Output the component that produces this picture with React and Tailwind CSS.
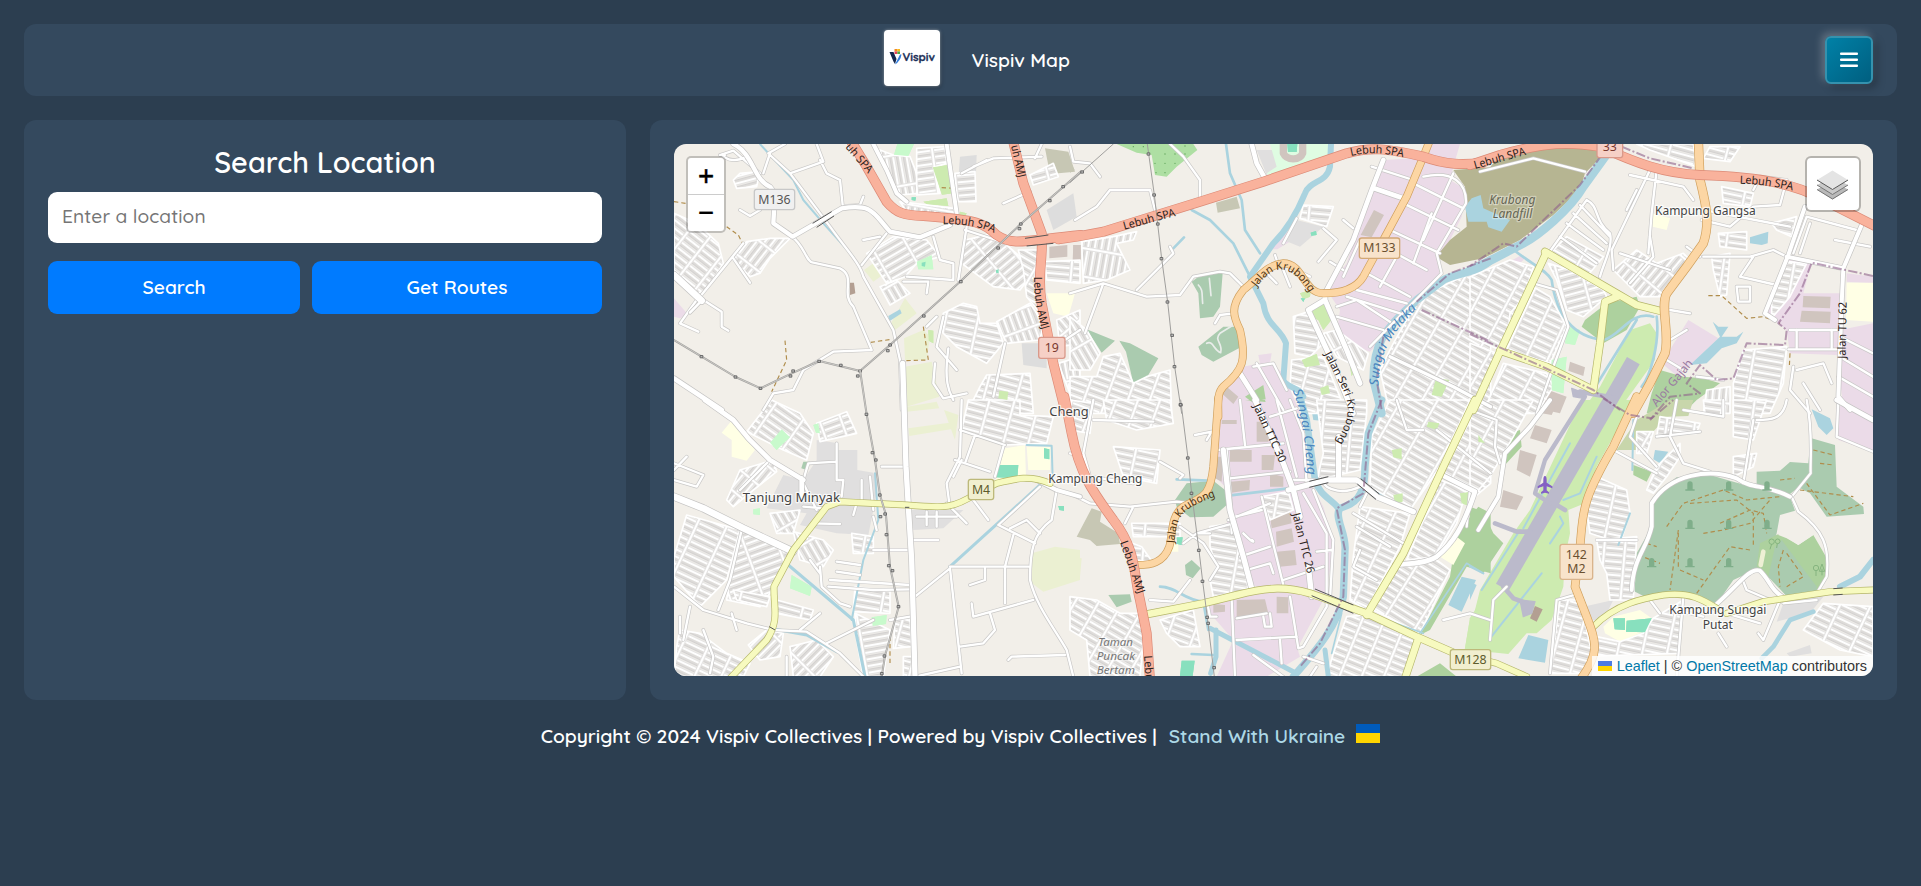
import React from "react";

/* Map sheets: each sheet is drawn at three units per pixel from its own origin. */
const SHEETS = {
  A: [660, 130],
  B: [1070, 130],
  C: [1470, 130],
  D: [660, 400],
  E: [1070, 400],
  F: [1470, 400],
};
const place = (s) => `translate(${SHEETS[s][0]} ${SHEETS[s][1]}) scale(0.33333)`;

const AREAS = [
  // industrial
  ["B", "#ebdbe8", "M940,90 L1030,85 1060,60 1085,42 1170,42 1150,110 1140,150 1190,180 1175,260 1105,400 1110,440 1040,500 900,665 860,650 800,610 810,540 770,480 830,400 905,170Z"],
  ["B", "#ebdbe8", "M565,675 L605,670 600,700 640,730 690,850 445,850 450,790 520,710 570,700Z"],
  ["B", "#ebdbe8", "M605,358 L650,300 668,330 622,358Z"],
  ["E", "#ebdbe8", "M450,0 L655,0 690,60 712,230 760,320 795,440 760,600 682,745 690,770 590,830 440,830 490,720 420,640 420,600 560,560 500,520 470,370 480,350 475,270 435,230Z"],
  ["C", "#ebdbe8", "M655,570 L745,625 625,740 575,700Z"],
  ["C", "#ebdbe8", "M950,390 L1025,395 1000,490 1110,490 1110,600 1209,580 1209,840 1120,830 1100,675 960,670 950,600 885,550Z"],
  ["C", "#ebdbe8", "M1130,430 L1209,440 1209,460 1130,455Z M100,405 L155,375 165,385 130,420Z"],
  ["F", "#ebdbe8", "M1100,20 L1209,0 1209,155 1105,120Z"],
  ["A", "#ebdbe8", "M42,505 L85,555 60,565 42,560Z"],
  // built-up grey
  ["D", "#e0dfdf", "M470,120 L535,130 535,150 592,150 592,210 640,218 655,250 640,330 625,405 530,400 420,375 440,340 320,325 370,225 430,240 470,180Z"],
  ["D", "#e0dfdf", "M750,330 L910,330 850,385 760,390Z"],
  ["B", "#e0dfdf", "M680,270 L760,290 690,350 640,330Z M560,60 L610,60 625,115 590,135Z"],
  ["A", "#dddddd", "M900,80 L950,75 945,215 890,210Z M1160,240 L1240,190 1250,260 1180,300Z M1085,640 L1160,640 1160,715 1090,705Z"],
  ["F", "#e0dfdf", "M340,620 L430,600 400,660 350,660Z M940,610 L1040,585 1060,590 1020,640 920,665Z M950,760 L1020,735 1025,760 960,770Z"],
  // landfill and brownfield
  ["C", "#b6b592", "M-50,120 L60,112 90,75 240,50 385,55 390,85 345,130 330,180 250,255 150,330 40,385 -60,405 -102,380 -60,330 -10,290 -15,170Z"],
  ["C", "#aad3df", "M-15,230 L5,205 32,195 40,235 120,270 95,305 55,292 50,275 -5,275Z"],
  ["A", "#c7c7b4", "M1155,55 L1225,65 1245,125 1170,132Z"],
  ["B", "#c7c7b4", "M438,218 L500,200 510,235 443,248Z M0,95 L14,120 0,128Z"],
  ["E", "#c7c7b4", "M65,325 L95,335 90,365 145,400 150,432 80,438 60,420 20,410Z"],
  // airfield
  ["C", "#cdebb0", "M480,600 L540,580 560,610 555,690 440,850 330,850 390,770Z"],
  ["F", "#cdebb0", "M335,0 L485,0 430,110 380,200 345,310 295,330 300,400 285,470 280,560 245,660 200,700 170,700 115,762 0,750 0,690 30,570 130,400 180,330Z"],
  ["E", "#cdebb0", "M1200,655 L1260,560 1260,790 1180,775Z"],
  // woods, parks
  ["C", "#add19e", "M345,570 L410,520 500,500 510,530 470,600 400,640 335,590Z"],
  ["E", "#add19e", "M1225,320 L1262,340 1262,520 1190,500 1080,690 1050,705 1140,530 1160,400Z"],
  ["F", "#add19e", "M85,110 L150,90 155,140 100,200Z M0,320 L40,335 70,400 100,430 40,520 0,500Z M495,60 L530,60 525,95 500,100Z M490,195 L545,215 530,245 490,225Z"],
  ["E", "#add19e", "M1110,790 L1160,830 1040,830Z M525,0 L585,0 587,6 545,2Z"],
  ["B", "#add19e", "M525,800 L580,765 587,808 545,815Z"],
  ["B", "#aedfa3", "M140,42 L370,42 382,60 320,110 290,140 255,135 245,75 200,68Z"],
  ["B", "#cdebb0", "M730,535 L770,520 792,560 760,600 745,570 722,560Z M695,690 L740,672 750,705 705,712Z M840,710 L862,710 845,738Z M750,775 L775,765 780,790 755,795Z M1098,745 L1138,750 1115,800 1085,795Z M690,490 L722,480 720,500 700,508Z"],
  ["E", "#cdebb0", "M965,150 L995,145 995,178 970,172Z M1075,65 L1108,70 1100,90 1070,80Z M1170,280 L1205,275 1198,318 1175,310Z M970,285 L998,280 998,305 975,310Z M1225,105 L1245,130 1225,125Z"],
  ["A", "#cdebb0", "M818,112 L870,104 878,190 846,194Z M790,215 L860,205 865,228 800,222Z M900,245 L920,250 915,260 898,256Z M805,600 L820,602 820,640 806,632Z M1018,782 L1045,785 1042,810 1015,805Z"],
  ["A", "#c8facc", "M712,42 L762,42 745,78 702,74Z M770,395 L815,375 820,418 775,418Z"],
  ["D", "#c8facc", "M330,128 L365,88 390,112 350,150Z M395,525 L455,560 450,588 390,565Z M460,75 L475,70 480,100 468,98Z M635,652 L680,645 678,672 638,678Z M280,328 L300,325 300,345 280,343Z"],
  ["C", "#c8facc", "M295,590 L330,600 315,645 285,640Z M245,690 L290,680 280,790 245,780Z"],
  ["C", "#aed1a0", "M570,720 L640,740 700,745 750,760 680,810 640,850 530,850 545,790Z"],
  ["F", "#c8d6ab", "M600,0 L670,0 655,48 590,50 500,150 440,150 500,60Z"],
  ["B", "#dffce2", "M600,42 L785,42 775,90 600,140 590,130 620,110Z"],
  // cemetery, forest
  ["B", "#aacbaf", "M365,455 L400,430 458,430 450,530 430,560 390,565 385,490Z"],
  ["B", "#aacbaf", "M385,650 L460,590 500,590 515,650 430,695 395,675Z M50,598 L135,632 95,668Z M148,632 L180,640 265,685 220,760 190,760 168,665Z"],
  ["E", "#aacbaf", "M315,300 L350,250 430,242 465,270 470,315 430,350 360,352 320,320Z M345,495 L365,480 392,505 368,535 348,525Z M115,585 L180,583 185,605 140,622Z"],
  ["F", "#aacbaf", "M620,232 L720,225 790,245 850,262 960,290 975,332 930,345 920,400 890,500 850,512 790,540 740,612 680,583 580,583 520,588 485,570 500,460 545,380 550,310 580,260Z"],
  ["F", "#aacbaf", "M860,215 L930,212 960,186 1015,190 1022,114 1095,135 1100,260 1180,320 1182,342 1070,350 1020,280 985,262 950,290 880,260 860,255Z"],
  ["F", "#add19e", "M870,430 L930,400 985,435 1030,405 1068,470 1070,530 1040,580 950,588 895,530 860,500Z"],
  ["F", "#aacbaf", "M935,420 L1040,560 1040,580 950,588 895,530 915,440Z"],
  ["F", "#f2efe9", "M930,350 L970,340 1030,405 985,435 950,415 925,405Z"],
  ["D", "#aacbaf", "M430,185 L450,185 440,210 424,205Z"],
  // scrub and schools
  ["A", "#ebf0d2", "M690,585 L735,505 770,550 705,600Z M612,420 L640,400 675,430 640,455Z M732,625 L790,600 810,620 800,690 735,690Z M735,710 L815,695 838,800 740,830Z"],
  ["D", "#ebf0d2", "M740,20 L830,5 838,25 740,35Z M745,85 L890,65 890,85 748,108Z M852,30 L895,45 885,120Z M1115,460 L1185,440 1260,450 1260,540 1150,575 1110,545Z"],
  ["E", "#ebf0d2", "M0,470 L35,475 30,530 0,540Z"],
  ["A", "#ffffe5", "M1160,490 L1245,490 1225,560 1180,550Z"],
  ["D", "#ffffe5", "M185,98 L212,65 250,95 270,130 285,150 260,182 215,170 215,120Z M1035,145 L1095,135 1098,235 1005,240Z M1100,140 L1172,140 1170,210 1105,210Z"],
  ["C", "#ffffe5", "M1130,458 L1209,458 1209,575 1128,570Z M140,440 L170,445 155,502 135,495Z M545,250 L600,265 590,300 548,290Z"],
  ["F", "#ffffe5", "M400,680 L430,650 510,630 545,655 520,695 450,725 405,700Z"],
  ["E", "#ffffe5", "M1160,410 L1185,430 1150,495 1110,470Z M305,430 L325,425 325,455 300,455Z"],
  // pitches
  ["D", "#88e0be", "M1018,195 L1075,195 1072,235 1008,232Z M1152,145 L1168,148 1168,178 1152,175Z M1195,318 L1212,318 1212,332 1198,330Z"],
  ["F", "#88e0be", "M430,655 L465,655 465,690 434,688Z M470,662 L545,655 525,697 468,695Z"],
  ["E", "#88e0be", "M335,782 L374,782 368,828 330,828Z M320,412 L338,412 335,435 322,432Z"],
  ["B", "#88e0be", "M652,42 L682,42 680,66 654,66Z M722,308 L738,303 740,315 724,317Z M692,505 L705,505 700,516Z"],
  ["A", "#88e0be", "M785,398 L797,395 795,410 785,408Z M755,202 L768,202 766,212 755,210Z M1008,420 L1016,418 1016,430 1008,428Z"],
  // water
  ["F", "#aad3df", "M175,705 L235,720 225,788 145,775Z M1025,28 L1080,55 1090,85 1070,105 1045,80Z M555,150 L595,155 570,190 550,178Z M0,545 L20,555 0,600Z"],
  ["C", "#aad3df", "M840,322 L895,305 893,340 875,345 840,340Z M660,705 L750,620 728,575 745,590 775,590 755,620 800,620 820,605 800,640 755,655 710,700Z"],
  ["E", "#aad3df", "M1175,530 L1218,540 1175,635 1135,615Z M915,255 L962,265 950,290 910,280Z M725,32 L782,40 780,65 730,60Z"],
  ["A", "#aad3df", "M685,558 L720,538 725,550 688,574Z"],
  // buildings
  ["A", "#d0c5bf", "M1168,350 L1222,345 1222,380 1168,385Z M1240,345 L1262,345 1262,395 1240,390Z M1095,380 L1130,385 1130,402 1098,402Z"],
  ["A", "#b39f92", "M570,458 L582,458 586,490 570,495Z"],
  ["B", "#d0c5bf", "M912,240 L942,255 905,322 872,315Z M470,770 L505,800 490,822 455,790Z M10,345 L32,345 32,392 8,390Z"],
  ["E", "#d0c5bf", "M480,150 L545,150 545,185 480,185Z M575,165 L615,165 610,210 575,210Z M440,170 L460,170 455,245 435,235Z M600,220 L640,230 640,260 600,260Z M482,245 L540,240 538,270 485,278Z M560,65 L595,65 595,125 560,125Z M600,350 L660,335 665,370 605,385Z M618,395 L665,385 672,425 620,440Z M620,455 L675,450 680,495 630,500Z M500,600 L585,598 595,640 500,650Z M620,590 L655,592 655,640 620,640Z M430,612 L465,615 465,635 430,638Z M455,60 L500,60 500,72 455,72Z"],
  ["C", "#d0c5bf", "M1000,498 L1082,500 1080,535 998,532Z M995,542 L1082,545 1080,580 990,575Z M300,695 L345,712 340,738 295,722Z M235,780 L290,800 270,850 225,840Z"],
  ["F", "#d0c5bf", "M225,0 L265,0 245,45 215,40Z M195,75 L245,90 230,130 180,115Z M150,150 L200,165 180,230 140,210Z M100,270 L160,290 140,330 90,320Z"],
  ["F", "#b39f92", "M195,618 L218,628 200,665 180,655Z"],
];

/* Housing estates: sheet, street direction in degrees, outline */
const ESTATES = [
  ["A", 38, "M42,250 L110,280 175,340 190,400 140,480 110,490 42,420Z"],
  ["A", 128, "M215,385 L260,335 330,325 390,325 330,385 300,430 270,440Z"],
  ["A", 165, "M220,150 L240,130 300,125 290,170 230,175Z"],
  ["A", 80, "M660,60 L700,75 750,80 770,130 780,190 715,195 680,130Z"],
  ["A", 172, "M770,55 L855,50 860,100 820,112 830,150 840,190 770,195Z"],
  ["A", 175, "M885,130 L945,125 948,215 895,215 885,170Z"],
  ["A", 100, "M720,215 L880,235 890,258 740,245Z"],
  ["A", 150, "M620,370 L700,320 800,330 840,380 770,400 735,440 680,460Z"],
  ["A", 60, "M660,470 L710,450 750,490 690,525Z"],
  ["A", 140, "M915,330 L1000,310 1080,380 1110,440 1080,480 1000,470 905,400Z"],
  ["A", 30, "M1075,360 L1135,360 1125,440 1150,560 1100,500 1090,420Z"],
  ["A", 12, "M850,550 L910,520 950,530 960,580 1010,580 1030,640 980,700 890,650 840,600Z"],
  ["A", 70, "M1010,575 L1110,520 1150,580 1140,630 1040,640Z"],
  ["A", 165, "M1110,135 L1180,100 1195,140 1120,165Z"],
  ["A", 5, "M1155,395 L1260,390 1260,460 1160,450Z"],
  ["A", 15, "M980,735 L1110,730 1120,850 920,850 960,770Z"],
  ["A", 50, "M1190,570 L1260,540 1260,640 1200,650Z"],
  ["A", 80, "M1195,700 L1260,680 1260,790 1230,790Z"],
  ["B", 100, "M35,335 L130,320 200,305 190,330 140,340 180,420 110,450 40,460Z"],
  ["B", 60, "M0,560 L50,600 90,670 60,720 0,720Z"],
  ["B", 20, "M100,680 L150,670 190,760 230,740 300,720 305,850 0,850 0,740 80,740Z"],
  ["B", 5, "M700,225 L790,230 770,290 690,265Z"],
  ["B", 10, "M670,560 L715,545 760,640 720,680 675,670Z"],
  ["B", 62, "M760,610 L800,600 895,670 880,720 840,700 800,680Z"],
  ["B", 15, "M665,690 L760,680 830,850 700,850 660,770Z"],
  ["B", 30, "M1050,500 L1200,430 1262,450 1262,830 1170,850 960,850 930,720 970,640Z"],
  ["C", 28, "M0,440 L120,390 190,410 150,540 90,660 0,620Z"],
  ["C", 30, "M0,640 L80,670 0,840Z"],
  ["C", 25, "M120,550 L190,470 240,500 290,590 240,700 110,660Z"],
  ["C", 165, "M235,400 L300,420 400,480 410,500 340,560 290,540 260,450Z"],
  ["C", 28, "M100,700 L230,730 250,770 200,850 40,850Z"],
  ["C", 30, "M240,370 L290,320 400,380 350,440Z"],
  ["C", 130, "M430,420 L500,360 560,400 640,370 660,390 580,500 510,500Z"],
  ["C", 8, "M725,380 L780,370 770,495 750,500 730,420Z M745,310 L830,305 830,360 750,350Z"],
  ["C", 12, "M755,170 L850,190 840,230 760,220Z M905,280 L980,260 965,320 920,300Z"],
  ["C", 10, "M820,660 L950,650 940,760 900,850 790,850 790,760Z"],
  ["C", 95, "M710,780 L780,770 780,850 700,850Z"],
  ["C", 10, "M905,480 L955,395 1010,400 960,500 905,565Z"],
  ["C", 15, "M500,42 L540,60 680,110 670,42Z M720,50 L810,50 780,95 700,85Z"],
  ["D", 35, "M335,0 L420,40 460,100 440,180 370,150 260,95Z"],
  ["D", 160, "M470,70 L560,35 590,100 480,125Z"],
  ["D", 15, "M925,0 L1080,0 1080,45 1180,50 1160,130 1035,135 905,90Z"],
  ["D", 25, "M80,345 L240,390 200,540 120,620 42,530 42,470Z"],
  ["D", 160, "M240,390 L340,430 390,460 330,580 300,620 200,600 215,500Z"],
  ["D", 130, "M240,210 L340,180 350,215 280,270 220,320 200,300Z"],
  ["D", 60, "M400,395 L490,420 520,450 490,500 420,480Z M330,340 L420,330 400,400 350,400Z"],
  ["D", 10, "M575,400 L640,410 640,460 580,460Z M585,560 L690,575 690,640 580,635Z"],
  ["D", 170, "M585,640 L690,690 670,830 610,830 590,720Z"],
  ["D", 15, "M705,660 L750,655 755,740 700,745Z M730,770 L765,770 765,830 730,830Z"],
  ["D", 25, "M60,690 L120,700 200,760 270,790 250,830 42,830 50,740Z"],
  ["D", 135, "M265,735 L320,690 370,700 360,770 300,780Z M390,740 L470,720 520,770 480,830 400,830Z"],
  ["D", 15, "M350,600 L460,630 450,660 350,640Z M220,570 L330,590 320,620 230,600Z"],
  ["E", 20, "M0,0 L70,10 60,100 0,90Z M100,0 L300,0 310,70 200,90 110,60Z"],
  ["E", 12, "M130,140 L270,150 260,250 160,230Z"],
  ["E", 5, "M185,370 L330,370 330,410 190,410Z M175,425 L215,440 250,490 200,480Z"],
  ["E", 10, "M420,380 L490,370 520,480 535,570 430,590 420,540 440,500 420,440Z"],
  ["E", 30, "M0,590 L80,600 150,640 215,640 220,720 210,830 60,830 50,720 0,690Z"],
  ["E", 20, "M270,660 L370,630 390,740 330,740 290,700Z"],
  ["E", 5, "M740,0 L890,0 890,40 870,210 740,240 760,160Z"],
  ["E", 30, "M960,0 L1200,0 1110,200 1020,330 900,260 905,110Z"],
  ["E", 28, "M1225,10 L1262,30 1262,250 1215,290 1120,220Z"],
  ["E", 25, "M870,320 L1020,340 990,440 890,630 840,600 850,470Z"],
  ["E", 30, "M1110,240 L1190,270 1160,370 1100,470 1010,480Z"],
  ["E", 32, "M970,500 L1100,480 1140,510 1050,700 910,630Z"],
  ["E", 22, "M830,650 L890,645 1040,710 1000,830 770,830 790,760Z"],
  ["E", 10, "M575,290 L655,275 670,330 600,360Z"],
  ["F", 28, "M0,40 L60,0 190,0 130,110 60,230 0,300Z"],
  ["F", 12, "M380,230 L470,270 480,340 450,430 360,400 350,330Z"],
  ["F", 5, "M380,420 L500,410 490,600 420,600 410,520 390,480Z"],
  ["F", 30, "M500,95 L550,95 530,160 500,160Z M560,200 L630,130 630,170 590,230 550,280 530,270Z"],
  ["F", 8, "M570,50 L690,70 680,100 560,110Z M700,0 L760,0 750,50 705,40Z M790,0 L890,0 850,120 790,110Z"],
  ["F", 10, "M790,170 L860,160 850,200 790,230Z"],
  ["F", 15, "M270,600 L340,600 350,690 370,780 330,820 240,820Z"],
  ["F", 12, "M550,655 L640,600 625,760 380,768 380,710 450,725 520,700Z"],
  ["F", 25, "M1060,610 L1209,620 1209,770 1110,750 1000,690Z"],
];

const STREAMS = [
  ["B", 18, "M783,42 L780,110 C770,160 720,150 705,190 C680,250 650,300 610,340 L540,440 580,520 C590,590 630,590 648,640 L640,750 C650,775 690,770 700,800"],
  ["E", 20, "M690,-10 L710,60 735,240 C750,290 790,300 805,325"],
  ["C", 26, "M405,80 L340,170 C300,240 200,320 160,340 C100,370 50,400 0,420"],
  ["B", 24, "M1262,390 C1220,430 1150,430 1120,450 L1040,510 C960,590 910,620 910,750 L935,850"],
  ["E", 22, "M935,0 L895,100 885,200 C885,300 850,310 810,325 C790,350 830,400 825,450 L820,590 C800,690 720,770 670,830"],
  ["E", 15, "M420,685 L670,815 M438,690 L438,770 422,820 M765,750 L775,830"],
  ["E", 8, "M475,287 L680,262 M320,238 L415,242 M270,560 C320,560 340,600 400,605 L415,690 M365,762 L430,765"],
  ["B", 8, "M468,42 L480,130 515,210 525,300 570,370 M365,240 L420,270 490,340 520,400 540,440 M310,355 L342,322"],
  ["C", 8, "M135,362 C180,400 230,420 245,450 C260,560 310,620 400,630 C450,620 480,540 550,560 M560,560 C570,640 540,740 515,770 M500,570 L370,780"],
  ["D", 9, "M385,495 L580,660 615,830 M1145,250 L870,500 M345,688 L440,705 530,755"],
  ["D", 6, "M645,220 L655,360 610,480 575,660 M1100,135 L1175,137 1178,235"],
  ["F", 6, "M300,130 L160,385 M380,170 L330,280 280,300 M150,390 L35,570 M215,520 L60,715 M270,350 L280,370 240,430 M490,60 L487,210 M480,340 L445,435 M0,500 L40,520"],
  ["F", 18, "M1209,480 L1170,530 1110,560"],
  ["F", 14, "M1030,635 L960,660 910,740 875,775"],
  ["A", 6, "M300,42 L330,75 400,150 430,210 490,280 580,380"],
  ["E", 5, "M1050,700 L1190,490 1240,520 M840,620 L1060,700 M815,640 L785,760"],
];

const MINOR = [
  ["A", "M195,75 C170,60 200,110 260,80 M180,75 L220,62 300,130 M330,70 L310,130 M375,42 L325,70 M330,75 L390,130 490,95 470,42 M480,90 L500,130 540,150 548,225 M390,130 L510,290 C560,360 600,400 610,440 L700,600 720,690 725,840 M395,320 C430,340 440,400 460,398 L540,415 C590,440 540,490 580,530 L635,660 520,665 430,720 400,780 340,790 310,840"],
  ["A", "M240,240 L270,258 300,240 M110,510 L60,580 115,605 M130,510 L185,545 185,590 205,602 M220,385 L270,458 M120,500 L250,340 M550,228 L600,225 610,200 M605,405 L680,310 M610,330 L660,320 M820,320 L840,390 880,400 880,450 740,440 M730,455 L805,455 800,490 M920,290 L895,450 M800,590 L830,560 M850,560 L830,650 890,720 M865,655 C850,760 870,790 880,810 M825,700 L820,760 850,805 920,790"],
  ["A", "M940,110 L1000,85 1145,80 M1030,220 L1110,185 M1125,85 L1145,42 M915,300 L1040,340 M905,130 L980,90 M1035,640 L1000,800 M1200,640 L1260,600"],
  ["B", "M0,50 L10,95 60,100 90,140 M15,270 L80,230 120,180 240,180 255,240 M300,42 L340,80 390,150 390,210 M200,480 L310,370 300,350 M0,490 L100,460 230,500 330,495 370,440 450,425 480,430 520,470 M100,460 L45,610 M435,580 L450,555 490,550"],
  ["B", "M640,340 L680,265 M745,395 L800,330 760,295 M780,395 L820,420 M820,270 L850,295 M615,375 L625,405 M590,430 L620,460 M640,420 L660,470 M700,430 L720,440 M1030,160 L1180,235 M1000,220 L1165,300 M960,300 L1110,370 M940,350 L1070,420 M890,430 L1020,500 M1060,140 C1150,120 1190,160 1188,220 L1100,370 1115,430 900,650 M905,110 L1030,150 M560,700 L640,840 M550,710 L610,700 650,780"],
  ["B", "M800,530 L860,510 960,575 M830,500 L990,550 M860,480 L1010,520 M800,560 L940,600 M870,330 L820,440 M1150,130 L1060,330 M1085,250 L1030,400 M980,380 L930,470"],
  ["C", "M30,125 L190,85 345,125 M480,135 L640,170 670,210 M540,120 L425,360 430,420 M560,120 L545,250 535,370 M500,180 L470,240 M350,210 L225,385 M330,225 L420,320 M290,280 L400,360 M350,210 C390,230 370,270 420,310 C430,350 400,400 390,440 M310,250 L410,340 M270,320 L380,400 M695,270 L780,290 850,230 930,225 950,150 870,140 850,180 M700,240 L960,290 M700,380 L840,380 910,360 950,380 M850,380 L810,440 920,465 M1010,260 L970,370 M1010,260 L1160,300 M1020,280 L990,370 M1095,330 L1200,350 M800,470 L840,470 840,515 805,515Z M1100,600 L960,600 M955,658 L1100,658 M600,540 L660,550 M590,690 L640,720 M600,630 L650,600 M680,740 L760,750 M980,720 L1060,700 1085,760 M1110,620 L1209,670 M1110,680 L1209,740 M1105,740 L1209,800 M1000,760 L1050,840"],
  ["C", "M190,460 L260,480 295,590 250,710 200,850 M650,350 L690,380 M540,320 L550,380 480,460 M450,370 L600,420 M970,710 L960,780 1020,850 M1085,600 L1085,655 M980,600 L980,655"],
  ["D", "M42,190 L130,225 110,260 42,240 M80,170 L42,210 M245,390 L210,540 175,630 M42,560 L130,630 260,670 340,690 440,695 540,760 610,830 M260,110 L330,180 240,270 M430,240 L445,190 530,185 530,130 M430,250 L470,330 M530,185 L530,240 550,240 545,290 M605,240 L605,310 M590,310 L580,345 M455,370 L540,372 M430,320 L490,325 M665,200 L735,200 M640,350 L650,390 M750,420 L835,420 M640,450 L740,450 M530,485 L600,495 M510,540 L750,555 M530,515 L600,525 M505,560 L640,570 750,568 M640,660 L500,730 M690,660 L750,650 M630,230 L640,330"],
  ["D", "M905,0 L900,170 860,250 868,310 M860,310 L920,370 M940,300 L985,360 M900,90 L1035,135 M885,180 L990,215 M945,105 L915,190 M1030,140 L1005,230 M905,180 L880,230 M1190,270 L1175,360 C1120,400 1110,450 1110,540 C1130,620 1180,680 1220,750 L1240,830 M1015,375 L1140,260 M1015,375 L1125,430 M1050,385 L1100,360 1140,400 M1060,405 L1035,500 1035,610 M870,500 L1105,500 M765,590 L870,505 905,820 M935,610 L940,650 1120,600 M990,640 L1005,690 970,730 900,740 M1045,780 L1055,770 1215,765 M765,830 L900,800 M930,555 L975,540 975,505 M480,500 L485,560 540,610 570,620 M450,480 L480,520 M60,650 L60,700 M90,620 L70,720 M130,690 L160,770 150,820 M230,690 L215,640 M380,770 L380,830 M480,640 L420,690 M770,350 L890,350 M800,335 L800,375 M830,335 L830,380"],
  ["E", "M0,280 L60,310 180,320 320,305 370,310 M165,370 L190,320 M70,0 L40,160 60,230 190,250 M0,160 L40,170 M70,60 L250,65 M270,185 L340,225 330,235 M375,105 L425,95 410,120 M330,380 L400,430 445,500 420,540 M340,430 L380,400 490,370 M385,400 L420,400 M360,540 L310,605 240,600 M510,0 L525,135 M440,150 L640,130 M470,150 L480,260 485,400 M480,235 L660,215 M620,0 L680,230 M660,0 L700,100 710,250 M600,50 L680,25 M475,360 L600,310 M575,290 L640,555 M495,350 L575,330 M510,470 L600,440 M520,400 C560,440 550,420 545,420 M530,510 L600,490 610,520 M640,540 L760,500 M700,280 L770,400 770,620 700,740 685,745 660,590 M730,270 L790,420 780,600 M740,455 L785,450 M660,240 L735,240 M485,600 L495,830 M500,655 L590,640 M500,720 L680,710 M630,720 L635,790 M600,640 L605,680 585,680 580,650 M410,600 L420,650 440,650"],
  ["E", "M980,0 L1010,90 1060,90 M900,260 L870,320 M850,340 L1000,430 M860,380 L960,440 M870,450 L850,500 920,540 M1200,270 L1190,380 M1100,90 L1262,220 M1260,660 L1200,640 1120,660 M700,770 L760,790 M550,765 L640,830 M740,800 L720,830 M750,235 C770,280 830,280 870,260"],
  ["F", "M0,30 L80,60 75,140 90,190 M620,0 L600,110 640,190 720,215 M850,60 L820,250 M760,0 L760,50 640,30 M950,0 C940,60 900,60 860,60 M1010,0 C1030,100 1020,180 1022,220 L965,290 985,335 C1060,390 1080,440 1070,530 L1040,580 M1105,0 L1100,110 1209,155 M560,110 L690,95 M500,50 L480,110 560,200 M380,420 L500,420 M640,590 L620,830 M540,600 L570,640 M745,700 L770,740 M620,630 L700,650 M770,640 L870,670 M820,545 L830,570 900,600 M930,600 L880,720 865,700 M940,610 L1040,600 M240,820 L260,600 330,580 M110,560 L70,600 60,720 M430,150 L560,220"],
];

const ROADS = [
  ["A", 13, "M220,42 C280,70 280,150 330,170 L345,190 340,280 398,320 545,235 C640,220 640,250 690,305 L780,322 870,285"],
  ["A", 20, "M42,435 L125,512"],
  ["A", 8, "M125,512 L90,548"],
  ["A", 14, "M42,745 L185,840"],
  ["A", 12, "M640,42 L680,120 710,190 740,215 M860,42 L890,250"],
  ["B", 14, "M545,42 L560,100 585,145 M940,90 L905,180 850,330 765,490 M912,175 L1000,205"],
  ["B", 15, "M765,490 L765,510 715,540 780,680 850,850 M765,510 L830,660 870,760 M510,730 L560,810"],
  ["B", 10, "M960,680 L1150,770 1262,830"],
  ["C", 12, "M1005,230 L955,375 885,550 915,570 M950,380 L1120,415 M1175,285 L1120,415 1115,520 1105,800 1140,840"],
  ["D", 14, "M135,0 L220,60 265,115 330,180 430,240 M425,235 L425,300"],
  ["D", 20, "M42,290 L130,325 250,385 400,455"],
  ["D", 16, "M728,-110 L738,200 745,320 755,480 765,830"],
  ["D", 12, "M1130,240 L1190,270 1260,290"],
  ["E", 16, "M555,0 L640,190 670,270 690,350 M655,270 L770,240 860,240 920,290 1030,335 M715,500 L725,590 M806,110 L806,240 M460,150 L480,330 520,470 545,565"],
  ["E", 14, "M1115,225 L1215,275 C1180,380 1150,430 1100,470 C1060,495 1000,490 975,495"],
  ["F", 12, "M25,390 L85,290 105,160 180,80 240,0 M485,570 C490,470 530,450 545,380 L545,310 C600,220 720,205 800,235 C850,270 880,250 960,290 M740,612 C800,560 840,500 870,512 C900,540 900,570 945,595"],
  ["F", 14, "M1100,0 L1209,60"],
];

const YELLOW = [
  ["C", 20, "M225,365 L440,490 500,525 580,545 M228,370 L90,665 10,840 M450,497 L405,515 390,640 370,780 M90,662 L230,710 370,780"],
  ["E", 20, "M1215,0 L1120,200 1000,460 890,645 M235,642 L400,610 500,585 C600,560 650,560 720,580 L890,640 1040,710 1155,760 M1045,715 L1005,835"],
  ["D", 17, "M210,835 L320,720 C360,660 340,620 342,560 L400,450 500,320 540,305 740,315 C860,325 880,325 950,280 L1010,250 C1070,235 1110,225 1170,250"],
  ["F", 17, "M370,680 C440,610 520,595 580,585 C660,575 700,600 740,625 M770,640 L880,605 1080,575 1209,570 M0,770 L80,790 170,830"],
];
const ORANGE = [
  ["B", 20, "M1080,30 L1060,80 1010,200 940,330 880,440 C850,490 780,490 760,490 C700,490 700,400 640,400 C590,405 570,440 520,480 C480,530 490,560 510,600 C530,690 520,720 460,770 C440,790 445,820 445,860"],
  ["E", 20, "M445,-5 L430,200 C420,300 390,290 340,320 C300,350 310,400 298,440 C280,490 240,495 205,495"],
  ["C", 24, "M685,30 L690,150 C710,230 720,280 700,340 L650,410 590,490 C570,530 600,610 585,670 L540,760 490,850"],
  ["F", 22, "M500,-10 L430,140 C330,310 340,340 330,440 L315,560 350,650 C380,730 390,760 330,840"],
];
const RED = [
  ["A", 26, "M565,20 L620,110 680,215 C710,250 730,255 790,258 C960,270 970,280 1010,315 C1060,350 1100,330 1262,315"],
  ["B", 26, "M-35,328 L20,320 100,305 390,215 580,155 830,70 C900,50 950,55 1060,80 C1130,105 1180,105 1240,98"],
  ["C", 26, "M0,105 L90,75 C230,35 300,35 390,50 C500,100 580,130 690,135 C900,140 1000,175 1050,205 L1215,288"],
  ["A", 26, "M1056,20 L1090,160 1145,310 C1150,400 1130,430 1145,520 L1180,700 1215,840"],
  ["E", 26, "M-17,-10 L5,100 C30,230 80,290 130,360 C200,450 190,520 210,600 L230,700 240,840"],
];

const POWER = [
  ["A", "M1262,125 L1082,282 900,455 690,645 600,723 478,693 395,730 302,775 227,741 125,680 42,630", [[1210, 170], [1170, 212], [1083, 282], [1079, 296], [1015, 354], [903, 455], [792, 558], [691, 645], [684, 662], [601, 723], [594, 738], [543, 706], [478, 694], [400, 723], [392, 738], [302, 775], [227, 741], [125, 680]]],
  ["D", "M600,-90 L620,43 645,180 660,285 678,345 690,500 716,620 675,768 665,830", [[620, 43], [638, 158], [648, 180], [660, 285], [676, 342], [662, 350], [680, 404], [687, 497], [698, 512], [716, 620], [674, 768], [666, 821]]],
  ["B", "M232,42 L253,195 275,386 293,516 314,710 335,850 M0,158 L130,42", [[236, 72], [253, 195], [264, 282], [275, 386], [293, 516], [307, 616], [314, 710], [333, 825], [37, 126]]],
  ["E", "M332,0 L354,174 365,280 387,451 398,544 412,652 433,830", [[332, 14], [354, 174], [365, 280], [387, 451], [398, 544], [412, 652], [415, 670], [433, 803]]],
];

const BORDERS = [
  ["C", "M455,50 L540,85 670,115 M395,75 L330,165 200,290 140,350 100,340 0,408 M0,612 L140,675 370,780 450,840 M1209,438 L1025,398 990,490 925,580 950,600 945,645 830,640 790,745 740,750 690,705 650,760 690,790 600,800 540,870"],
  ["B", "M1262,385 L1140,430 1040,515 M1055,540 L1262,635 M940,620 L920,750 935,840"],
  ["E", "M935,0 L895,100 880,280 800,325 825,450 820,590 750,730 690,800"],
  ["F", "M400,-5 L480,45 545,55 610,0"],
];

const PATHS = [
  ["A", "M42,215 L110,225 M200,290 L235,315 250,345 M375,632 L380,690 335,785 M790,590 L805,690 735,692 M632,637 L695,628 M845,173 L885,175"],
  ["C", "M715,497 L755,497 830,565 880,560 930,580 M960,670 L958,710"],
  ["F", "M625,500 L625,390 600,570 M590,380 L640,310 700,290 760,270 830,300 930,290 M700,400 L760,390 840,370 900,300 M660,310 L800,300 850,340 850,440 M680,580 L780,440 840,450 M750,370 L840,330 880,340 890,400 M630,510 L700,540 M505,465 L570,490 M530,430 L560,440 M940,450 L925,500 930,560 M950,460 L1000,530 950,560 M1030,150 L1090,165 M1050,190 L1090,195 M990,270 L1150,290 M1010,250 L1080,345 1180,310 M930,240 L975,235"],
  ["D", "M690,710 L690,790"],
];

const BRIDGES = [
  ["A", "M458,280 L515,245 M470,292 L522,258 M1095,325 L1165,315 M1100,348 L1180,340"],
  ["E", "M725,587 L850,640 M735,567 L850,615 M718,262 L775,248 M718,244 L775,230 M862,252 L918,298 M872,236 L928,282"],
  ["D", "M735,322 L748,322 M328,680 L345,690"],
  ["F", "M1090,566 L1118,564 M1090,585 L1118,583"],
];

const hues = {
  name: "#444444",
  road: "#2b2320",
  jalan: "#4e3310",
  water: "#4a87bf",
};

/* sheet, text, x, y, rotation, length, size, colour, italic */
const LABELS = [
  ["D", "Tanjung Minyak", 248, 305, 0, 292, 40, hues.name],
  ["C", "Kampung Gangsa", 555, 255, 0, 302, 38, hues.name],
  ["D", "Cheng", 1168, 47, 0, 118, 39, hues.name],
  ["D", "Kampung Cheng", 1165, 248, 0, 282, 37, hues.name],
  ["F", "Kampung Sungai", 598, 641, 0, 291, 37, hues.name],
  ["F", "Putat", 698, 687, 0, 91, 37, hues.name],
  ["C", "Krubong", 58, 221, 0, 138, 37, "#666655", true],
  ["C", "Landfill", 68, 264, 0, 119, 37, "#666655", true],
  ["E", "Taman", 85, 737, 0, 104, 35, "#777777", true],
  ["E", "Puncak", 80, 780, 0, 115, 35, "#777777", true],
  ["E", "Bertam", 80, 822, 0, 115, 35, "#777777", true],
  ["A", "uh SPA", 555, 52, 49, 105, 34, hues.road],
  ["A", "uh AMJ", 1053, 48, 77, 98, 34, hues.road],
  ["B", "Lebuh SPA", 163, 299, -15, 160, 34, hues.road],
  ["B", "Jalan TTC 30", 549, 828, 65, 190, 34, hues.road],
  ["E", "Jalan TTC 26", 667, 342, 76, 185, 34, hues.road],
  ["C", "Jalan TU 62", 1127, 686, -89, 170, 34, hues.road],
  ["E", "Lebuh AMJ", 150, 427, 71, 165, 34, hues.road],
  ["E", "Lebuh AMJ", 222, 767, 86, 165, 34, hues.road],
  ["C", "Alor Gajah", 560, 832, -50, 172, 35, "#9a7aa0"],
];

/* Labels that bend along a line: sheet, text, path, length, size, colour, italic */
const CURVED = [
  ["A", "Lebuh SPA", "M848,283 C910,283 950,285 1014,314", 158, 34, hues.road],
  ["A", "Lebuh AMJ", "M1122,440 C1122,500 1130,550 1150,612", 162, 34, hues.road],
  ["B", "Lebuh SPA", "M843,78 C900,65 940,68 1010,84", 158, 34, hues.road],
  ["C", "Lebuh SPA", "M15,117 C60,105 110,90 185,69", 160, 34, hues.road],
  ["C", "Lebuh SPA", "M809,161 C860,162 910,168 980,184", 160, 34, hues.road],
  ["B", "Jalan Krubong", "M560,472 C615,395 665,400 726,498 L736,515", 208, 33, hues.jalan],
  ["E", "Jalan Krubong", "M313,430 C320,340 340,325 445,286", 205, 33, hues.jalan],
  ["B", "Jalan Seri Krubong", "M763,672 L815,772 C845,830 835,870 805,925 L795,945", 288, 33, hues.road],
  ["B", "Sungai Melaka", "M925,768 C930,650 970,610 1050,525", 268, 38, hues.water, true],
  ["B", "Sungai Cheng", "M668,782 C695,850 705,930 712,1030 L715,1060", 258, 38, hues.water, true],
];

/* sheet, lines, x, y, width, height, fill, border, text */
const SHIELDS = [
  ["A", ["M136"], 283, 178, 121, 61, "#f0f0f0", "#c8c8c8", "#555555"],
  ["A", ["19"], 1136, 622, 79, 63, "#f6d0c6", "#d9998a", "#7a3a30"],
  ["B", ["M133"], 868, 324, 121, 61, "#f8e3cb", "#d2a875", "#6a5030"],
  ["C", ["33"], 381, 20, 77, 63, "#f6d0c6", "#d9998a", "#7a3a30"],
  ["D", ["M4"], 925, 238, 76, 61, "#f1efcf", "#bdb97a", "#5d5c2c"],
  ["E", ["M128"], 1141, 749, 121, 60, "#f1efcf", "#bdb97a", "#5d5c2c"],
  ["F", ["142", "M2"], 270, 433, 98, 105, "#f8e3cb", "#d9b48c", "#6a5030"],
];

const Lines = ({ data, fill, edge, extra = 4 }) => (
  <>
    {data.map(([s, w, d], i) => (
      <path key={"e" + i} transform={place(s)} d={d} stroke={edge} strokeWidth={w + extra} />
    ))}
    {data.map(([s, w, d], i) => (
      <path key={"f" + i} transform={place(s)} d={d} stroke={fill} strokeWidth={w} />
    ))}
  </>
);

function CityMap() {
  const minor = MINOR.map(([s, d]) => [s, 7, d]);
  return (
    <svg viewBox="674 144 1199 532" className="block h-[532px] w-full bg-[#f2efe9]" preserveAspectRatio="none" aria-label="Map">
      <defs>
        {ESTATES.map(([, a], i) => (
          <pattern key={i} id={"estate" + i} width={62 + (i % 4) * 11} height="20" patternUnits="userSpaceOnUse" patternTransform={`rotate(${a})`}>
            <rect width="120" height="20" fill="#f0eeea" />
            <rect y="0" width="120" height="10" fill="#d0cecc" />
            <rect y="1.5" width="120" height="7" fill="#ffffff" />
            <rect y="12.5" width="120" height="5" fill="#d3d1d0" />
            <rect x="0" width="12" height="20" fill="#d6d4d2" />
            <rect x="2" width="8" height="20" fill="#ffffff" />
          </pattern>
        ))}
        {CURVED.map(([, , d], i) => (
          <path key={i} id={"bend" + i} d={d} />
        ))}
      </defs>

      {AREAS.map(([s, c, d], i) => (
        <path key={i} transform={place(s)} d={d} fill={c} />
      ))}
      {ESTATES.map(([s, , d], i) => (
        <path key={i} transform={place(s)} d={d} fill={`url(#estate${i})`} stroke="#fff" strokeWidth="5" strokeLinejoin="round" />
      ))}
      {/* estate greens stay visible above the streets */}
      {AREAS.filter(([s, c]) => (c === "#cdebb0" && (s === "B" || s === "A" || s === "E")) || c === "#c8facc" || c === "#88e0be").map(([s, c, d], i) => (
        <path key={i} transform={place(s)} d={d} fill={c} />
      ))}

      <g fill="none" strokeLinecap="round" strokeLinejoin="round">
        {STREAMS.map(([s, w, d], i) => (
          <path key={i} transform={place(s)} d={d} stroke="#aad3df" strokeWidth={w} />
        ))}
        {PATHS.map(([s, d], i) => (
          <path key={i} transform={place(s)} d={d} stroke="#b08d4c" strokeWidth="3.5" strokeDasharray="13 9" strokeLinecap="butt" />
        ))}
        {/* stadium track */}
        <g transform={place("B")}>
          <path d="M640,30 L640,70 C650,92 690,92 698,70 L698,30" stroke="#d0c5bf" strokeWidth="22" strokeLinecap="butt" />
        </g>
        {/* runway and taxiways */}
        <g transform={place("F")} stroke="#bbbacb">
          <path d="M490,-118 L97,562" strokeWidth="44" strokeLinecap="butt" />
          <path d="M330,-25 L440,-5 M100,560 L130,595 170,610 M265,318 L285,330 M75,370 L140,395 180,395" strokeWidth="14" />
          <path d="M345,-10 L225,180 195,280 240,310" strokeWidth="13" />
          <path d="M150,600 L195,605 185,640 160,650Z M305,-35 L345,-20 340,-5 310,-10Z" fill="#bbbacb" strokeWidth="4" />
        </g>
        {/* tracks in the burial grounds */}
        <g transform={place("B")} stroke="#e9edea" strokeWidth="5">
          <path d="M385,465 C400,480 395,490 398,520 M418,445 L423,497 M410,640 C430,630 430,660 452,668 C460,640 430,630 450,610 L490,585" />
        </g>
        <Lines data={minor} fill="#ffffff" edge="#c9c8c7" />
        <Lines data={ROADS} fill="#ffffff" edge="#c4c3c2" />
        <Lines data={YELLOW} fill="#f7fabf" edge="#b5b66a" />
        <Lines data={ORANGE} fill="#fcd6a4" edge="#cf9f5c" />
        <Lines data={RED} fill="#f9b29c" edge="#dc8a76" />
        {BRIDGES.map(([s, d], i) => (
          <path key={i} transform={place(s)} d={d} stroke="#555" strokeWidth="3" strokeLinecap="butt" />
        ))}
        {BORDERS.map(([s, d], i) => (
          <path key={i} transform={place(s)} d={d} stroke="#8d618b" strokeOpacity="0.6" strokeWidth="6" strokeDasharray="28 7 6 7" strokeLinecap="butt" />
        ))}
        {POWER.map(([s, d, pts], i) => (
          <g key={i} transform={place(s)}>
            <path d={d} stroke="#a09f9d" strokeWidth={i < 2 ? 6 : 3} />
            {i < 2 && <path d={d} stroke="#dedcd8" strokeWidth="2" />}
            {pts.map(([x, y], k) => (
              <rect key={k} x={x - 3.5} y={y - 3.5} width="7" height="7" fill="#bbb" stroke="#5c5c5c" strokeWidth="2.5" />
            ))}
          </g>
        ))}
      </g>

      {/* cemetery stones */}
      <g transform={place("F")} fill="#7fae8a">
        {[[660, 258], [776, 258], [891, 258], [660, 373], [776, 373], [891, 373], [545, 488], [660, 488], [776, 488]].map(([x, y], i) => (
          <path key={i} d={`M${x - 14},${y + 14} v-4 h6 v-16 a8,8 0 0 1 16,0 v16 h6 v4Z`} />
        ))}
      </g>
      {/* orchard dots */}
      <g transform={place("B")} fill="#5fa35a">
        {[[190, 50], [220, 50], [285, 72], [315, 72], [345, 72], [285, 100], [315, 100], [255, 100], [258, 128], [285, 128], [345, 48]].map(([x, y], i) => (
          <circle key={i} cx={x} cy={y} r="2" />
        ))}
      </g>
      {/* trees */}
      <g transform={place("F")} fill="none" stroke="#86b580" strokeWidth="3">
        <path d="M900,448 L905,432 M920,444 L922,430 M1038,528 V512 M1056,526 V506" />
        <circle cx="905" cy="425" r="8" />
        <circle cx="923" cy="424" r="7" />
        <circle cx="1038" cy="504" r="8" />
        <path d="M1056,492 L1064,514 H1048Z" />
        <path d="M880,455 L872,495" stroke="#eef0d5" strokeWidth="14" strokeLinecap="round" />
      </g>
      {/* airport */}
      <g transform={place("F")} fill="#8461c4">
        <path d="M225,228 c4,0 5,6 5,12 v8 l17,11 v6 l-17,-6 v12 l7,6 v4 l-12,-3 l-12,3 v-4 l7,-6 v-12 l-17,6 v-6 l17,-11 v-8 c0,-6 1,-12 5,-12Z" />
      </g>

      <g fontFamily="'Noto Sans', sans-serif" fontWeight="400">
        {LABELS.map(([s, t, x, y, r, len, size, c, it], i) => (
          <g key={i} transform={place(s)}>
            <text
              transform={`translate(${x} ${y}) rotate(${r})`}
              fontSize={size}
              textLength={len}
              lengthAdjust="spacingAndGlyphs"
              fill={c}
              fontStyle={it ? "italic" : "normal"}
              stroke={r ? "none" : "#ffffff"}
              strokeOpacity={it ? 0.35 : 0.75}
              strokeWidth="8"
              strokeLinejoin="round"
              paintOrder="stroke"
            >
              {t}
            </text>
          </g>
        ))}
        {CURVED.map(([s, t, , len, size, c, it], i) => (
          <g key={i} transform={place(s)}>
            <text fontSize={size} fill={c} fontStyle={it ? "italic" : "normal"} textLength={len} lengthAdjust="spacingAndGlyphs">
              <textPath href={"#bend" + i} textLength={len} lengthAdjust="spacingAndGlyphs">{t}</textPath>
            </text>
          </g>
        ))}
        {SHIELDS.map(([s, lines, x, y, w, h, f, b, c], i) => (
          <g key={i} transform={place(s)}>
            <rect x={x} y={y} width={w} height={h} rx="7" fill={f} stroke={b} strokeWidth="4" />
            {lines.map((t, k) => (
              <text key={k} x={x + w / 2} y={y + h / 2 + 13 + (k - (lines.length - 1) / 2) * 43} fontSize="37" textAnchor="middle" fill={c}>
                {t}
              </text>
            ))}
          </g>
        ))}
      </g>
    </svg>
  );
}

function Logo() {
  return (
    <div className="flex h-14 w-14 items-center justify-center rounded bg-white shadow-[0_0_3px_rgba(255,255,255,0.5),1px_2px_4px_rgba(0,0,0,0.3)]">
      <svg viewBox="0 0 48 18" className="mb-1 ml-px h-[18px] w-12" aria-label="Vispiv">
        <path d="M1.500,5 H5.500 L8.500,12 L7,17 Q5.500,15 4.800,13Z" fill="#14284f" />
        <path d="M7,17.500 L12,7.500 H13.500 Q12.500,14 7,17.500Z" fill="#2f7de0" />
        <rect x="6.500" y="2" width="2.800" height="2.500" fill="#f08a24" />
        <rect x="9.300" y="2" width="2.700" height="2.500" fill="#fbbc1e" />
        <rect x="6.500" y="4.500" width="2.800" height="2.500" fill="#e23f5a" />
        <rect x="9.300" y="4.500" width="2.700" height="2.500" fill="#54a847" />
        <text x="14.500" y="13.500" fontFamily="Quicksand, Inter, sans-serif" fontWeight="700" fontSize="11.500" textLength="32.500" lengthAdjust="spacingAndGlyphs" fill="#1d3058" stroke="#1d3058" strokeWidth="0.3">
          Vispiv
        </text>
      </svg>
    </div>
  );
}

export default function App() {
  return (
    <div className="flex min-h-[886px] flex-col bg-[#2c3e50] p-6 font-[Quicksand,Lato,sans-serif] font-semibold text-white">
      <header className="flex h-[72px] items-center justify-between rounded-xl bg-[#34495e] px-6">
        <div className="w-12" />
        <div className="flex items-center gap-8 pl-8">
          <div className="mb-1">
            <Logo />
          </div>
          <h1 className="w-[98px] whitespace-nowrap text-[19.200px] leading-6">Vispiv Map</h1>
        </div>
        <button
          aria-label="Menu"
          className="flex h-12 w-12 items-center justify-center rounded-md border-2 border-[#3592ae] bg-linear-to-br from-[#0081a7] to-[#005f80] shadow-[-3px_-3px_8px_rgba(255,255,255,0.25),4px_4px_8px_rgba(0,0,0,0.25)]"
        >
          <svg viewBox="0 0 18 16" className="h-4 w-[18px]" fill="white">
            <rect y="0.500" width="18" height="2.600" rx="1" />
            <rect y="6.500" width="18" height="2.600" rx="1" />
            <rect y="12.500" width="18" height="2.600" rx="1" />
          </svg>
        </button>
      </header>

      <main className="mt-6 flex h-[580px] gap-6">
        <section className="w-[602px] shrink-0 rounded-xl bg-[#34495e] p-6">
          <h2 className="text-center text-[28.800px] leading-9">Search Location</h2>
          <input
            placeholder="Enter a location"
            className="mt-3 block h-[51px] w-full rounded-[9px] bg-white px-[14px] pb-1 text-[19.200px] font-medium tracking-[0.100px] text-gray-800 outline-none placeholder:text-[#757575]"
          />
          <div className="mt-[18px] flex gap-3">
            <button className="h-[53px] w-[252px] rounded-[9px] bg-[#007bff] text-[19.200px]">Search</button>
            <button className="h-[53px] flex-1 rounded-[9px] bg-[#007bff] text-[19.200px]">Get Routes</button>
          </div>
        </section>

        <section className="flex-1 rounded-xl bg-[#34495e] p-6">
          <div className="relative overflow-hidden rounded-xl">
            <CityMap />
            <div className="absolute left-3 top-3 w-10 overflow-hidden rounded-[5px] border-2 border-black/20 bg-white bg-clip-padding text-black">
              <button className="flex h-[37px] w-full items-center justify-center border-b border-[#ccc] pb-0.5 font-['DejaVu_Sans_Mono',monospace] text-[26px] font-normal leading-none [-webkit-text-stroke:0.4px_black]">+</button>
              <button className="flex h-9 w-full items-center justify-center pb-0.5 font-['DejaVu_Sans_Mono',monospace] text-[26px] font-normal leading-none [-webkit-text-stroke:0.2px_black]">−</button>
            </div>
            <button aria-label="Layers" className="absolute right-3 top-3 flex h-14 w-14 items-center justify-center rounded-md border-2 border-black/25 bg-white bg-clip-padding">
              <svg viewBox="0 0 31 30" className="mr-px mt-0.5 h-[30px] w-[31px]">
                <path d="M0,19.500 L15.500,11 31,19.500 15.500,29.500Z" fill="#b9b9b9" />
                <path d="M0,19.500 L15.500,29 31,19.500" fill="none" stroke="#747474" />
                <path d="M0,15 L15.500,7 31,15 15.500,25Z" fill="#c9c9c9" />
                <path d="M0,15 L15.500,24.500 31,15" fill="none" stroke="#747474" />
                <path d="M0,10 L15.500,0.500 31,10 15.500,20Z" fill="#e4e4e4" />
                <path d="M0,10 L15.500,19.500 31,10" fill="none" stroke="#555" />
              </svg>
            </button>
            <div className="absolute bottom-0 right-0 flex h-5 items-center whitespace-pre bg-white/80 px-[6px] font-['Liberation_Sans',Arial,sans-serif] text-[14.400px] font-normal leading-5 text-[#333]">
              <span className="mr-[5px] flex h-[10px] w-[14px] flex-col">
                <span className="h-[5px] bg-[#4c7be1]" />
                <span className="h-[5px] bg-[#ffd500]" />
              </span>
              <a className="text-[#0078a8]">Leaflet</a>
              <span> | © </span>
              <a className="text-[#0078a8]">OpenStreetMap</a>
              <span> contributors</span>
            </div>
          </div>
        </section>
      </main>

      <footer className="mt-6 flex h-6 items-center justify-center whitespace-nowrap text-[19.200px] leading-6">
        <span>Copyright © 2024 Vispiv Collectives | Powered by Vispiv Collectives |</span>
        <a className="ml-3 text-[#add8e6]">Stand With Ukraine</a>
        <span className="mb-1.5 ml-[11px] flex h-[19px] w-6 flex-col">
          <span className="h-[9px] bg-[#005bbb]" />
          <span className="h-[10px] bg-[#ffd500]" />
        </span>
      </footer>
    </div>
  );
}
